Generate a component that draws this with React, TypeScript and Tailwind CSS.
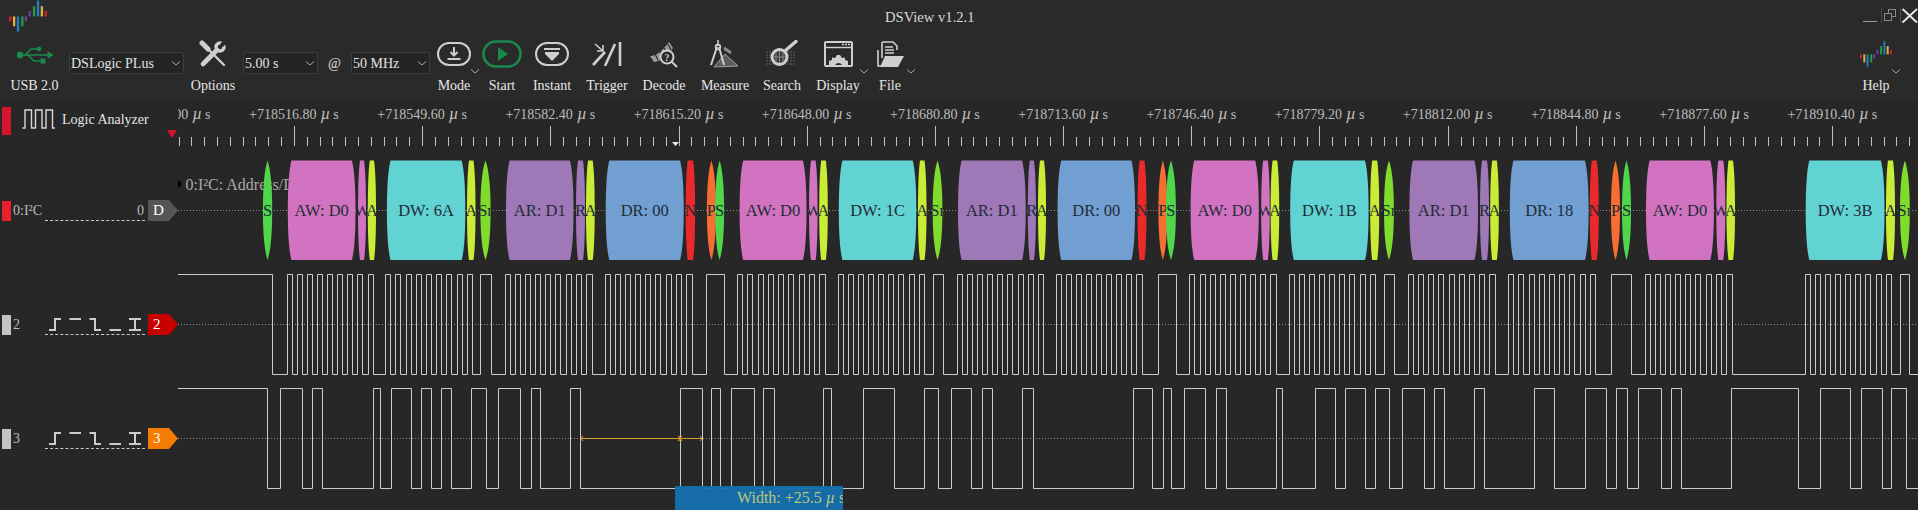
import React, { ReactNode } from 'react';

const ICON = '#cfcfcf';
const GREEN = '#1a8a4c';

const LOGO_BARS: [number, number, number, string][] = [
  [0, 40, 12, '#c8222c'],
  [10, 40, 24, '#e0b040'],
  [20, 40, 37, '#1f7fc0'],
  [31, 40, 24, '#2a9a4a'],
  [40, 40, 12, '#6a3fa0'],
  [50, 27, 13, '#6a3fa0'],
  [61, 15, 25, '#2a9a4a'],
  [71, 1, 39, '#1f7fc0'],
  [81, 15, 25, '#e0b040'],
  [91, 27, 13, '#c8222c'],
];

const AppLogo = ({ className }: { className: string }) => (
  <svg viewBox="0 0 97 78" preserveAspectRatio="none" className={className}>
    {LOGO_BARS.map(([x, y, h, c]) => (
      <rect key={x} x={x} y={y} width="6" height={h} fill={c} />
    ))}
  </svg>
);

const Chevron = ({ className = '' }: { className?: string }) => (
  <svg width="10" height="5" viewBox="0 0 10 5" className={className}>
    <polyline points="1,0.5 5,4 9,0.5" fill="none" stroke="#a8a8a8" strokeWidth="1" />
  </svg>
);

const Select = ({ label, className }: { label: string; className: string }) => (
  <div className={`flex h-[22px] items-center justify-between self-start mt-[16px] rounded-[2px] border border-[#3d3d3d] bg-[#242424] pl-[1px] pr-[2px] text-[14px] text-[#e2e2e2] ${className}`}>
    <span className="whitespace-nowrap">{label}</span>
    <Chevron />
  </div>
);

type ToolProps = { label: string; className: string; chevron?: string; children?: ReactNode };

const Tool = ({ label, className, chevron, children }: ToolProps) => (
  <div className={`relative flex shrink-0 flex-col items-center ${className}`}>
    <div className="flex h-[36px] items-center justify-center">{children}</div>
    <div className="flex h-[26px] items-center whitespace-nowrap text-[14px] text-[#e6e6e6]">{label}</div>
    {chevron && <Chevron className={`absolute top-[33px] ${chevron}`} />}
  </div>
);

const UsbIcon = () => (
  <svg width="36" height="18" viewBox="0 0 36 18" className="mt-[2px]">
    <g fill={GREEN} stroke={GREEN}>
      <circle cx="3" cy="9" r="3" />
      <line x1="3" y1="9" x2="32" y2="9" strokeWidth="1.5" />
      <path d="M31 6 L36 9 L31 12 Z" />
      <path d="M8 9 L14 3 L21 3" fill="none" strokeWidth="1.5" />
      <circle cx="22" cy="3" r="2" />
      <path d="M11 9 L17 15 L24 15" fill="none" strokeWidth="1.5" />
      <rect x="24" y="13" width="4" height="4" />
    </g>
  </svg>
);

const OptionsIcon = () => (
  <svg width="28" height="28" viewBox="0 0 28 28">
    <g stroke={ICON} fill="none" strokeLinecap="round">
      <line x1="3" y1="3" x2="9" y2="9" strokeWidth="5" />
      <line x1="9" y1="9" x2="25" y2="25" strokeWidth="2.4" />
      <line x1="4" y1="24" x2="18" y2="10" strokeWidth="4.6" />
      <circle cx="21" cy="7" r="4" strokeWidth="3.4" />
      <line x1="23" y1="5" x2="28" y2="0" stroke="#2a2a2a" strokeWidth="4" />
    </g>
  </svg>
);

const ModeIcon = () => (
  <svg width="34" height="24" viewBox="0 0 34 24">
    <rect x="1" y="1" width="32" height="22" rx="11" fill="none" stroke={ICON} strokeWidth="2" />
    <path d="M17 5 V13 M13.5 10 L17 13.5 L20.5 10" fill="none" stroke={ICON} strokeWidth="2" />
    <rect x="10.5" y="16" width="13" height="2" fill={ICON} />
  </svg>
);

const StartIcon = () => (
  <svg width="40" height="28" viewBox="0 0 40 28">
    <rect x="1.5" y="1.5" width="37" height="25" rx="12.5" fill="none" stroke={GREEN} strokeWidth="2.6" />
    <path d="M16 7 L26 14 L16 21 Z" fill={GREEN} />
  </svg>
);

const InstantIcon = () => (
  <svg width="34" height="24" viewBox="0 0 34 24">
    <rect x="1" y="1" width="32" height="22" rx="11" fill="none" stroke={ICON} strokeWidth="2" />
    <rect x="9" y="6" width="16" height="2" fill={ICON} />
    <path d="M10 10 H24 V12 L17 19 L10 12 Z" fill={ICON} />
  </svg>
);

const TriggerIcon = () => (
  <svg width="30" height="24" viewBox="0 0 30 24">
    <g stroke={ICON} fill="none">
      <line x1="28" y1="0" x2="28" y2="24" strokeWidth="2.6" />
      <line x1="13" y1="24" x2="23" y2="2" strokeWidth="2.6" />
      <line x1="1" y1="23" x2="13" y2="10" strokeWidth="2.6" />
      <path d="M3 2 L11 9 M11 3 V9 H5" strokeWidth="1.6" />
    </g>
  </svg>
);

const DecodeIcon = () => (
  <svg width="30" height="28" viewBox="0 0 30 28">
    <path d="M1 16 C8 16 14 10 20 2 L24 8 C20 15 10 22 5 22 Z" fill="#9a9a9a" />
    <path d="M6 14 L9 20 M11 11 L14 18 M15 8 L18 14 M19 4 L22 10" stroke="#2a2a2a" strokeWidth="1.2" />
    <circle cx="18" cy="17" r="6.5" fill="#2a2a2a" stroke={ICON} strokeWidth="2" />
    <line x1="22.5" y1="21.5" x2="28" y2="27" stroke={ICON} strokeWidth="2" />
    <text x="18" y="20.5" textAnchor="middle" fontSize="10" fontWeight="700" fill={ICON}>?</text>
  </svg>
);

const MeasureIcon = () => (
  <svg width="32" height="28" viewBox="0 0 32 28">
    <g stroke={ICON} fill="none">
      <path d="M16 14 L29 26 L5 27 Z" fill="#5c5c5c" strokeWidth="1" stroke="#a0a0a0" />
      <path d="M15 8 L22 13" stroke="#8a8a8a" strokeWidth="3" />
      <line x1="9" y1="0" x2="9" y2="6" strokeWidth="1.6" />
      <path d="M8 7 L2 25 M10 7 L15 25" strokeWidth="2" />
      <circle cx="9" cy="7" r="2.4" strokeWidth="1.6" />
    </g>
  </svg>
);

const SearchIcon = () => (
  <svg width="32" height="28" viewBox="0 0 32 28">
    <g stroke="#5e5e5e" strokeWidth="1" strokeDasharray="2 1">
      <line x1="0" y1="12" x2="30" y2="12" />
      <line x1="0" y1="15" x2="30" y2="15" />
      <line x1="0" y1="18" x2="30" y2="18" />
      <line x1="0" y1="21" x2="30" y2="21" />
      <line x1="0" y1="24" x2="30" y2="24" />
    </g>
    <circle cx="13.5" cy="17" r="7.5" fill="#3a3a3a" stroke={ICON} strokeWidth="3" />
    <path d="M13.5 11 V23 M8 17 H19 M10 12.5 V21.5 M17 12.5 V21.5" stroke="#8a8a8a" strokeWidth="1" />
    <line x1="20" y1="10" x2="30" y2="1.5" stroke={ICON} strokeWidth="3.4" strokeLinecap="round" />
  </svg>
);

const DisplayIcon = () => (
  <svg width="29" height="26" viewBox="0 0 29 26">
    <rect x="1" y="1" width="27" height="24" rx="1" fill="none" stroke={ICON} strokeWidth="2" />
    <line x1="1" y1="6.5" x2="28" y2="6.5" stroke={ICON} strokeWidth="1.4" />
    <path d="M18 3.5 H20 M21 3.5 H23 M24 3.5 H26" stroke={ICON} strokeWidth="1.6" />
    <path d="M5 24 V20 L8 19 L8 16.5 L11 17 L13 14 H16 L18 17 L21 16.5 L21 19 L24 20 V24 H18 A4 4 0 0 0 11 24 Z" fill={ICON} />
  </svg>
);

const FileIcon = () => (
  <svg width="28" height="26" viewBox="0 0 28 26">
    <path d="M6 17 V2 Q6 1 7 1 H17 L21 5 V9" fill="none" stroke={ICON} strokeWidth="1.6" />
    <path d="M9 6 H17 M9 9 H18 M9 12 H18" stroke={ICON} strokeWidth="1.4" />
    <path d="M2 9 V25 H5" fill="none" stroke={ICON} strokeWidth="1.6" />
    <path d="M9 15 H28 L22 26 H4 Z" fill={ICON} />
  </svg>
);

const WindowControls = () => (
  <svg width="58" height="26" viewBox="1860 0 58 26" className="ml-auto">
    <line x1="1863" y1="21.5" x2="1877" y2="21.5" stroke="#9a9a9a" strokeWidth="1" />
    <line x1="1881.5" y1="7" x2="1881.5" y2="23" stroke="#4d4d4d" />
    <rect x="1888.5" y="9.5" width="7" height="7" fill="none" stroke="#8a8a8a" />
    <rect x="1884.5" y="13.5" width="7" height="7" fill="#2a2a2a" stroke="#8a8a8a" />
    <line x1="1900.5" y1="7" x2="1900.5" y2="23" stroke="#4d4d4d" />
    <path d="M1902.5 9 L1917 22.5 M1917 9 L1902.5 22.5" stroke="#e8e8e8" strokeWidth="1.8" />
  </svg>
);

const TICK_LABELS = ['484.00', '516.80', '549.60', '582.40', '615.20', '648.00', '680.80', '713.60', '746.40', '779.20', '812.00', '844.80', '877.60', '910.40'];
const TICK_START = 165.7;
const TICK_STEP = 128.2;

const Ruler = () => {
  const minors = Array.from({ length: 140 }, (_, i) => i);
  return (
    <svg width="1740" height="50" viewBox="178 100 1740 50" className="shrink-0">
      {TICK_LABELS.map((t, i) => (
        <text key={t} x={TICK_START + i * TICK_STEP} y="119" textAnchor="middle" fontSize="14" fill="#bdbdbd">
          {`+718${t}`}
          <tspan dx="4" fontSize="17" fontStyle="italic">µ</tspan>
          <tspan dx="3">s</tspan>
        </text>
      ))}
      {minors.map((i) => {
        const x = Math.round(TICK_START + (i * TICK_STEP) / 10) + 0.5;
        if (x < 178) return null;
        return <line key={i} x1={x} x2={x} y1={i % 10 === 0 ? 126 : 137} y2="146" stroke="#c0c0c0" />;
      })}
      <path d="M672 142 H679 L675.5 146 Z" fill="#f0f0f0" />
    </svg>
  );
};

const BLOCK: Record<string, string> = {
  pink: '#d173c0',
  yellow: '#c9ec36',
  cyan: '#62d3d3',
  purple: '#9f78b8',
  blue: '#719fd1',
  green: '#4fd64a',
  lime: '#7fdc2c',
  red: '#ea2a2a',
  orange: '#f86e32',
};

const BLOCKS: [number, number, string, string][] = [
  [262.9, 272.2, 'green', 'S'],
  [287.8, 355.5, 'pink', 'AW: D0'],
  [358, 366, 'pink', 'W'],
  [367.8, 376, 'yellow', 'A'],
  [386.9, 465.3, 'cyan', 'DW: 6A'],
  [467, 475.5, 'yellow', 'A'],
  [480.4, 490.6, 'lime', 'Sr'],
  [506, 573.5, 'purple', 'AR: D1'],
  [576, 585, 'purple', 'R'],
  [586, 594.7, 'yellow', 'A'],
  [605.7, 683.7, 'blue', 'DR: 00'],
  [685.7, 695.1, 'red', 'N'],
  [706.9, 715.9, 'orange', 'P'],
  [715.1, 724.1, 'green', 'S'],
  [739.6, 806.5, 'pink', 'AW: D0'],
  [809, 817.6, 'pink', 'W'],
  [819.2, 827.8, 'yellow', 'A'],
  [838.8, 916.3, 'cyan', 'DW: 1C'],
  [918, 926.5, 'yellow', 'A'],
  [932.7, 942.4, 'lime', 'Sr'],
  [958, 1025.7, 'purple', 'AR: D1'],
  [1027.8, 1035.9, 'purple', 'R'],
  [1038, 1046, 'yellow', 'A'],
  [1057.6, 1135, 'blue', 'DR: 00'],
  [1137.6, 1146.5, 'red', 'N'],
  [1158.4, 1167.3, 'orange', 'P'],
  [1166, 1175.9, 'green', 'S'],
  [1190.6, 1258.8, 'pink', 'AW: D0'],
  [1261.2, 1269.8, 'pink', 'W'],
  [1270.6, 1279.2, 'yellow', 'A'],
  [1290.2, 1368.6, 'cyan', 'DW: 1B'],
  [1370.2, 1379.2, 'yellow', 'A'],
  [1384, 1393.9, 'lime', 'Sr'],
  [1409.4, 1478, 'purple', 'AR: D1'],
  [1480, 1489, 'purple', 'R'],
  [1490.2, 1498.8, 'yellow', 'A'],
  [1509.8, 1588.6, 'blue', 'DR: 18'],
  [1589.8, 1598.8, 'red', 'N'],
  [1611, 1620, 'orange', 'P'],
  [1622, 1631, 'green', 'S'],
  [1646, 1713.9, 'pink', 'AW: D0'],
  [1716.3, 1725.3, 'pink', 'W'],
  [1726.5, 1735, 'yellow', 'A'],
  [1805.7, 1884.5, 'cyan', 'DW: 3B'],
  [1886, 1895, 'yellow', 'A'],
  [1900, 1909.8, 'lime', 'Sr'],
];

const LENS = ['S', 'Sr', 'P'];

const blockPath = (l: number, r: number, label: string) => {
  const top = 160.5;
  const mid = 210.5;
  const bot = 260;
  // start/stop marks come to a point, short bits keep a flat top
  const h = LENS.includes(label) ? (r - l) / 2 : label.length === 1 ? 2 : 3.6;
  const t = top + 14;
  const b = bot - 14;
  return `M${l + h} ${top} H${r - h} Q${r} ${t} ${r} ${mid} Q${r} ${b} ${r - h} ${bot} H${l + h} Q${l} ${b} ${l} ${mid} Q${l} ${t} ${l + h} ${top} Z`;
};

// clock bursts, [start, end], 9 pulses each
const SCL_GROUPS: [number, number][] = [
  [286.5, 372.6], [385.3, 471.8], [504.5, 591], [604.5, 691], [737.1, 824.1], [837.6, 923.7],
  [956.7, 1042.9], [1056.3, 1141.2], [1189.4, 1275.4], [1288.6, 1374.7], [1407.8, 1494.3],
  [1508.2, 1594.7], [1644.5, 1731], [1804.9, 1890.6],
];
const SCL_SINGLE: [number, number][] = [
  [480.4, 490.6], [706.1, 724.1], [932.6, 942.9], [1157.6, 1175.5], [1383.7, 1393.9], [1610.6, 1631.4], [1900.4, 1909.4],
];

const sclEdges = () => {
  const pulses: [number, number][] = [...SCL_SINGLE];
  SCL_GROUPS.forEach(([s, e]) => {
    const p = (e - s - 5) / 8;
    for (let i = 0; i < 9; i++) pulses.push([s + i * p, s + i * p + (i === 8 ? 5.5 : 5)]);
  });
  pulses.sort((a, b) => a[0] - b[0]);
  return [272.2, ...pulses.flat()];
};

const SDA_EDGES = [
  267.3, 280.4, 301.6, 312.2, 322.4, 372.6, 379.6, 391.4, 411.4, 421.2, 431.4, 441.2, 451.4, 471.4, 485.7, 498.4,
  520.4, 530.6, 540.4, 570.2, 580.4, 680, 701.6, 711.4, 719.6, 731.4, 753.5, 763.3, 773.5, 823.3, 830.6, 863.3,
  893.5, 923.7, 937.6, 950.6, 971.4, 982.4, 992.2, 1022.4, 1032.7, 1132.7, 1152.2, 1163.3, 1170.6, 1183.7, 1204.9,
  1215.5, 1225.7, 1275.5, 1282.4, 1314.7, 1334.7, 1344.5, 1364.9, 1374.7, 1389, 1401.6, 1423.7, 1433.9, 1444, 1473.9,
  1483.7, 1534.3, 1554.3, 1584.5, 1605.7, 1615.5, 1626.5, 1638.4, 1660.8, 1670.6, 1680.8, 1731, 1798.4, 1820, 1850.2,
  1861.2, 1881.6, 1891.4, 1905.7, 1917.6,
];

const wavePath = (edges: number[], high: number, low: number) => {
  let d = `M178 ${high}`;
  let level = high;
  edges.forEach((x) => {
    const px = Math.round(x) + 0.5;
    const next = level === high ? low : high;
    d += ` H${px} V${next}`;
    level = next;
  });
  return `${d} H1918`;
};

const Traces = () => (
  <svg width="1740" height="360" viewBox="178 150 1740 360" className="shrink-0">
    <g stroke="#8c8c8c" strokeDasharray="1 2">
      <line x1="178" x2="1918" y1="210.5" y2="210.5" />
      <line x1="178" x2="1918" y1="324.5" y2="324.5" />
      <line x1="178" x2="1918" y1="438.5" y2="438.5" />
    </g>
    <path d="M178 180 L182 184 L178 188 Z" fill="#000" />
    <text x="185.5" y="190" fontSize="16" fill="#a8a8a8">0:I²C: Address/Data</text>
    {BLOCKS.map(([l, r, c, label]) => {
      const id = `b${Math.round(l)}`;
      const d = blockPath(l, r, label);
      return (
        <g key={id}>
          <clipPath id={id}>
            <path d={d} />
          </clipPath>
          <path d={d} fill={BLOCK[c]} />
          <text clipPath={`url(#${id})`} x={(l + r) / 2} y="216" textAnchor="middle" fontSize="16.5" fill="#1f2c38">
            {label}
          </text>
        </g>
      );
    })}
    <path d={wavePath(sclEdges(), 274.5, 374.5)} fill="none" stroke="#cccccc" />
    <path d={wavePath(SDA_EDGES, 388.5, 488.5)} fill="none" stroke="#cccccc" />
    <g stroke="#d9a030" fill="none">
      <line x1="581" x2="702" y1="438.5" y2="438.5" strokeWidth="1.2" />
      <path d="M583 436 L581 438.5 L583 441 M700 436 L702 438.5 L700 441 M678 436 L682 441 M682 436 L678 441 M680 435.5 V441.5" />
    </g>
  </svg>
);

const TriggerMarks = () => (
  <svg width="100" height="20" viewBox="0 0 100 20">
    <g fill="none" stroke="#cccccc" strokeWidth="2">
      <path d="M4 16 H10 V5 H16" />
      <path d="M24.5 5 H36" />
      <path d="M44.5 5 H50 V16 H56" />
      <path d="M64.5 16 H76" />
      <path d="M84 5 H96 M90 5 V16 M84 16 H96" />
    </g>
  </svg>
);

type RowProps = { square: string; name: string; tag: string; tagBg: string; className?: string; children: ReactNode };

const ChannelRow = ({ square, name, tag, tagBg, className = '', children }: RowProps) => (
  <div className={`flex h-[21px] items-center pl-[2px] ${className}`}>
    <div className={`h-[20px] w-[9px] shrink-0 ${square}`} />
    <div className="w-[34px] shrink-0 pl-[2px] text-[14px] text-[#bdbdbd]">{name}</div>
    <div className="flex h-[21px] w-[100px] shrink-0 items-center justify-end border-b border-dashed border-[#c8c8c8] text-[14px] text-[#bdbdbd]">
      {children}
    </div>
    <div className={`ml-[3px] flex h-[21px] w-[30px] shrink-0 items-center pl-[5px] text-[15px] text-white [clip-path:polygon(0_0,70%_0,100%_50%,70%_100%,0_100%)] ${tagBg}`}>
      {tag}
    </div>
  </div>
);

const App = () => {
  return (
    <div className="flex h-[510px] w-[1918px] flex-col overflow-hidden bg-[#272727] font-['Liberation_Serif',serif]">
      <div className="flex h-[36px] shrink-0 items-start bg-[#2a2a2a]">
        <AppLogo className="ml-[9px] h-[32px] w-[38px] shrink-0" />
        <div className="ml-[838px] mt-[8px] whitespace-nowrap text-[14.6px] leading-[18px] text-[#d8d8d8]">DSView v1.2.1</div>
        <WindowControls />
      </div>

      <div className="flex h-[64px] shrink-0 bg-[#2a2a2a]">
        <Tool label="USB 2.0" className="w-[69px]"><UsbIcon /></Tool>
        <Select label="DSLogic PLus" className="w-[115px] shrink-0" />
        <Tool label="Options" className="w-[58px]"><OptionsIcon /></Tool>
        <Select label="5.00 s" className="ml-[1px] w-[75px] shrink-0" />
        <div className="mt-[16px] flex h-[22px] w-[33px] shrink-0 items-center justify-center text-[14px] text-[#e2e2e2]">@</div>
        <Select label="50 MHz" className="w-[79px] shrink-0" />
        <Tool label="Mode" className="w-[48px]" chevron="left-[40px]"><ModeIcon /></Tool>
        <Tool label="Start" className="w-[48px]"><StartIcon /></Tool>
        <Tool label="Instant" className="w-[52px]"><InstantIcon /></Tool>
        <Tool label="Trigger" className="w-[58px]"><TriggerIcon /></Tool>
        <Tool label="Decode" className="w-[56px]"><DecodeIcon /></Tool>
        <Tool label="Measure" className="w-[66px]"><MeasureIcon /></Tool>
        <Tool label="Search" className="w-[48px]"><SearchIcon /></Tool>
        <Tool label="Display" className="w-[64px]" chevron="left-[53px]"><DisplayIcon /></Tool>
        <Tool label="File" className="w-[40px]" chevron="left-[36px]"><FileIcon /></Tool>
        <Tool label="Help" className="ml-auto mr-[22px] w-[40px]" chevron="left-[35px]">
          <AppLogo className="h-[26px] w-[32px]" />
        </Tool>
      </div>

      <div className="flex h-[50px] shrink-0">
        <div className="relative flex w-[178px] shrink-0 items-start pl-[2px] pt-[7px]">
          <div className="h-[28px] w-[9px] shrink-0 bg-[#d5152e]" />
          <svg width="33" height="20" viewBox="0 0 33 20" className="ml-[11px] mt-[2px] shrink-0">
            <path d="M0.5 19 H3 V1 H9.5 V19 H13.5 V1 H20 V19 H24 V1 H30.5 V19 H33" fill="none" stroke="#d8d8d8" strokeWidth="1.4" />
          </svg>
          <div className="ml-[7px] mt-[4px] whitespace-nowrap text-[14px] leading-[18px] text-[#e6e6e6]">Logic Analyzer</div>
          <svg width="10" height="8" viewBox="0 0 10 8" className="absolute left-[167px] top-[30px]">
            <path d="M0 0 H10 L5 8 Z" fill="#d5152e" />
          </svg>
        </div>
        <Ruler />
      </div>

      <div className="relative flex flex-1">
        <div className="flex w-[178px] shrink-0 flex-col pt-[50px]">
          <ChannelRow square="bg-[#e8202a]" name="0:I²C" tag="D" tagBg="bg-[#555555]">
            <span className="pr-[1px]">0</span>
          </ChannelRow>
          <ChannelRow square="bg-[#c4c4c4]" name="2" tag="2" tagBg="bg-[#c80000]" className="mt-[93px]">
            <TriggerMarks />
          </ChannelRow>
          <ChannelRow square="bg-[#c4c4c4]" name="3" tag="3" tagBg="bg-[#f57c00]" className="mt-[93px]">
            <TriggerMarks />
          </ChannelRow>
        </div>
        <Traces />
        <div className="absolute bottom-0 left-[675px] h-[24px] w-[168px] overflow-hidden whitespace-nowrap bg-[#1470ae]/95 pl-[62px] text-[16px] leading-[23px] text-[#bcc77e]">
          Width: +25.5 <span className="italic">µ</span> s
        </div>
      </div>
    </div>
  );
};

export default App;
